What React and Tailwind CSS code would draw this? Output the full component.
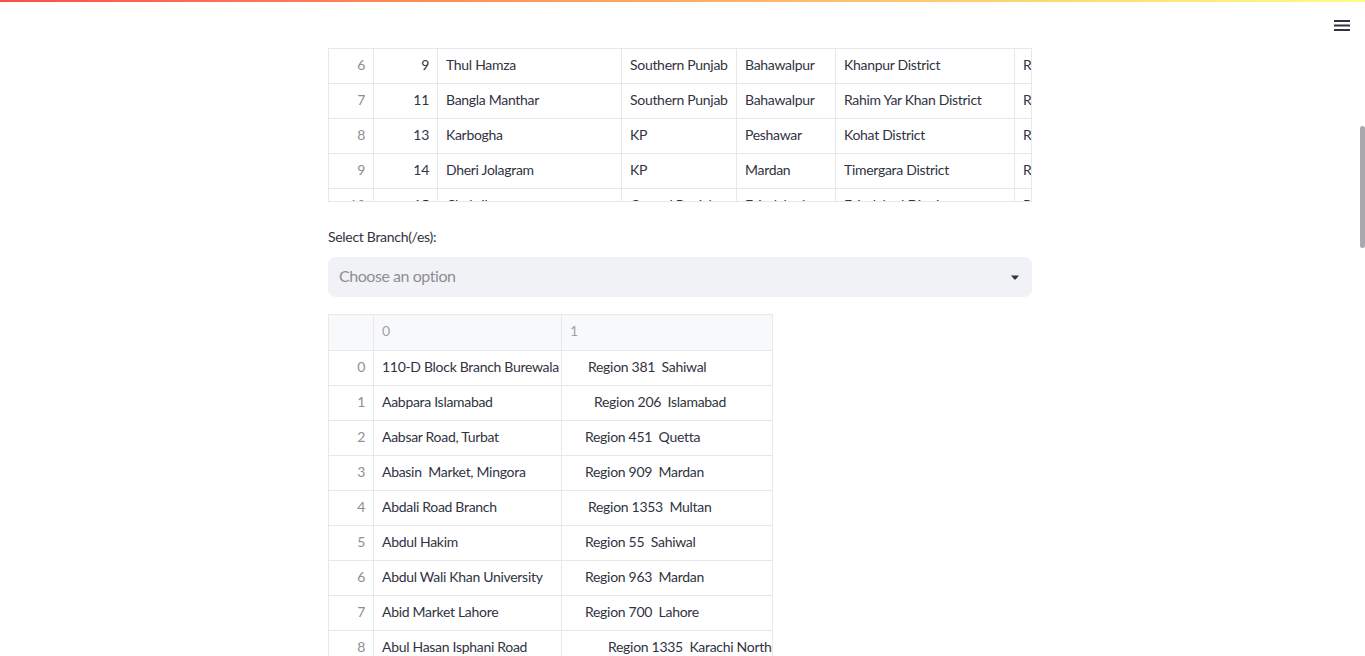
import React from 'react';

const topRows = [
  { idx: 6, id: 9, name: 'Thul Hamza', zone: 'Southern Punjab', city: 'Bahawalpur', district: 'Khanpur District', region: 'R' },
  { idx: 7, id: 11, name: 'Bangla Manthar', zone: 'Southern Punjab', city: 'Bahawalpur', district: 'Rahim Yar Khan District', region: 'R' },
  { idx: 8, id: 13, name: 'Karbogha', zone: 'KP', city: 'Peshawar', district: 'Kohat District', region: 'R' },
  { idx: 9, id: 14, name: 'Dheri Jolagram', zone: 'KP', city: 'Mardan', district: 'Timergara District', region: 'R' },
  { idx: 10, id: 15, name: 'Chak Jhumra', zone: 'Central Punjab', city: 'Faisalabad', district: 'Faisalabad District', region: 'R' },
];

const branches = [
  { name: '110-D Block Branch Burewala', region: 'Region 381  Sahiwal', pad: 'pl-[26px]' },
  { name: 'Aabpara Islamabad', region: 'Region 206  Islamabad', pad: 'pl-[32px]' },
  { name: 'Aabsar Road, Turbat', region: 'Region 451  Quetta', pad: 'pl-[23px]' },
  { name: 'Abasin  Market, Mingora', region: 'Region 909  Mardan', pad: 'pl-[23px]' },
  { name: 'Abdali Road Branch', region: 'Region 1353  Multan', pad: 'pl-[26px]' },
  { name: 'Abdul Hakim', region: 'Region 55  Sahiwal', pad: 'pl-[23px]' },
  { name: 'Abdul Wali Khan University', region: 'Region 963  Mardan', pad: 'pl-[23px]' },
  { name: 'Abid Market Lahore', region: 'Region 700  Lahore', pad: 'pl-[23px]' },
  { name: 'Abul Hasan Isphani Road', region: 'Region 1335  Karachi North', pad: 'pl-[46px]' },
];

const cell = 'h-[35px] flex items-center pb-[4px] border-r border-b border-[#e6e8ec] whitespace-pre overflow-hidden shrink-0';

export default function App() {
  return (
    <div
      className="relative w-[1365px] h-[656px] overflow-hidden bg-white text-[#31333f] tracking-[-0.3px]"
      style={{ fontFamily: 'Lato, "Open Sans", sans-serif' }}
    >
      {/* decoration bar */}
      <div className="h-[2px] w-full bg-gradient-to-r from-[#ff4b4b] to-[#fffd80]" />

      {/* header menu */}
      <svg className="absolute left-[1334px] top-[20px]" width="16" height="12" viewBox="0 0 16 12">
        <rect x="0" y="0" width="16" height="2" fill="#31333f" />
        <rect x="0" y="4.5" width="16" height="2" fill="#31333f" />
        <rect x="0" y="9" width="16" height="2" fill="#31333f" />
      </svg>

      {/* scrollbar */}
      <div className="absolute left-[1360px] top-[126px] w-[5px] h-[122px] rounded-full bg-[#a8a8ad]" />

      <div className="w-[1360px]">
        <div className="mx-auto w-[704px] pt-[46px]">
          {/* first dataframe, scrolled */}
          <div className="h-[154px] border border-[#e6e8ec] overflow-hidden text-[14px]">
            {topRows.map((r) => (
              <div key={r.idx} className="flex">
                <div className={`${cell} w-[45px] justify-end pr-[8px] text-[#8e8f96]`}>{r.idx}</div>
                <div className={`${cell} w-[64px] justify-end pr-[8px]`}>{r.id}</div>
                <div className={`${cell} w-[184px] px-[8px]`}>{r.name}</div>
                <div className={`${cell} w-[115px] px-[8px]`}>{r.zone}</div>
                <div className={`${cell} w-[99px] px-[8px]`}>{r.city}</div>
                <div className={`${cell} w-[179px] px-[8px]`}>{r.district}</div>
                <div className={`${cell} w-[16px] pl-[8px] border-r-0`}>{r.region}</div>
              </div>
            ))}
          </div>

          {/* multiselect */}
          <div className="mt-[25px] text-[14px] leading-[20px]">Select Branch(/es):</div>
          <div className="mt-[10px] h-[40px] rounded-[8px] bg-[#f0f2f6] flex items-center justify-between pl-[11px] pr-[13px]">
            <span className="text-[16px] text-[#8d8e95] tracking-[-0.45px] pb-[2px]">Choose an option</span>
            <svg width="8" height="5" viewBox="0 0 8 5">
              <path d="M0 0.5 H8 L4.6 4.5 H3.4 Z" fill="#31333f" />
            </svg>
          </div>

          {/* second dataframe */}
          <div className="mt-[17px] w-[445px] border-t border-l border-r border-[#e6e8ec] text-[14px]">
            <div className="flex bg-[#f8f9fb]">
              <div className="h-[36px] w-[45px] border-r border-b border-[#e6e8ec] shrink-0" />
              <div className="h-[36px] w-[188px] border-r border-b border-[#e6e8ec] flex items-center pb-[4px] px-[8px] text-[#a0a1a8] shrink-0">0</div>
              <div className="h-[36px] w-[210px] border-b border-[#e6e8ec] flex items-center pb-[4px] px-[8px] text-[#a0a1a8] shrink-0">1</div>
            </div>
            {branches.map((b, i) => (
              <div key={i} className="flex">
                <div className={`${cell} w-[45px] justify-end pr-[8px] text-[#8e8f96]`}>{i}</div>
                <div className={`${cell} w-[188px] px-[8px]`}>{b.name}</div>
                <div className={`h-[35px] w-[210px] flex items-center pb-[4px] border-b border-[#e6e8ec] whitespace-pre overflow-hidden shrink-0 ${b.pad}`}>
                  {b.region}
                </div>
              </div>
            ))}
          </div>
        </div>
      </div>
    </div>
  );
}
